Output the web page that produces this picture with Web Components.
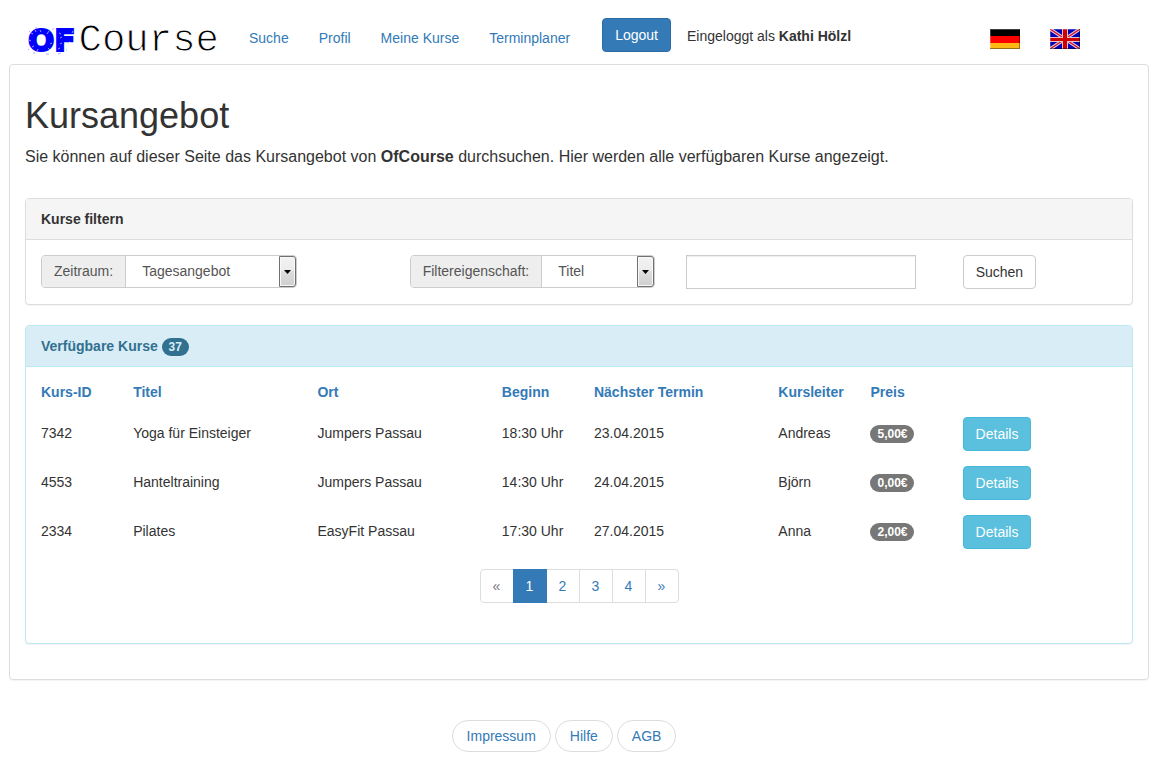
<!DOCTYPE html>
<html lang="de">
<head>
<meta charset="utf-8">
<meta name="viewport" content="width=device-width, initial-scale=1">
<title>OfCourse – Kursangebot</title>
<style>
  body {
    margin: 0;
    background: #fff;
    color: #333;
    font: 14px/20px "Liberation Sans", Arial, sans-serif;
  }
</style>
</head>
<body>
<oc-app></oc-app>

<script>
const base = `
  *, *::before, *::after { box-sizing: border-box; }
  a { color: #337ab7; text-decoration: none; }
  a:hover { text-decoration: underline; }
`;

function define(name, html, ready) {
  customElements.define(name, class extends HTMLElement {
    constructor() {
      super();
      const t = document.createElement('template');
      t.innerHTML = html;
      this.attachShadow({ mode: 'open' }).appendChild(t.content.cloneNode(true));
    }
    connectedCallback() {
      if (ready) ready(this, this.shadowRoot);
    }
  });
}

define('oc-logo', `
  <style>${base}
    :host { display: block; width: 191px; }
    a { position: relative; display: flex; align-items: baseline; line-height: 44px; white-space: nowrap; }
    a:hover { text-decoration: none; }
    .of { width: 53px; font-family: "DejaVu Sans", sans-serif; font-weight: 700; font-size: 31px; color: #00f; -webkit-text-stroke: 2px #00f; }
    .course { font-family: "Liberation Mono", "Courier New", monospace; font-size: 39px; color: #000; -webkit-text-stroke: 1px #fff; }
    svg { position: absolute; left: 0; top: 9px; }
  </style>
  <a href="#"><span class="of">OF</span><span class="course">Course</span>
  <svg width="53" height="28" viewBox="0 0 53 28" aria-hidden="true" fill="none" stroke="#fff" stroke-width="0.6">
    <path d="M3 6l2 1M7 3l1 2M21 4l-2 3M1 13l2 1M4 20l2-1M9 24l1-2M20 21l2 2M24 16l-2 1M31 6l2 1M34 10l-2 1M32 17l2-1M30 22l2-1M45 4l-1 2M41 15l2 1M12 3l1 2"/>
    <path stroke="#77f" d="M1 5l1-1M7 1h2M24 2h2M0 22l1 1M5 26h2M18 27h3M38 23h1M30 27l3-1"/>
  </svg></a>
`);

define('oc-flag', `
  <style>${base}
    :host { display: block; }
    a { display: block; }
    svg { display: none; }
    :host([country="de"]) .de, :host([country="gb"]) .gb { display: block; }
  </style>
  <a href="#">
    <svg class="de" width="30" height="20" viewBox="0 0 30 20">
      <path fill="#000" d="M0 0h30v7H0z"/><path fill="#f00" d="M0 7h30v7H0z"/><path fill="#fcb914" d="M0 14h30v6H0z"/>
      <path fill="#fff" fill-opacity=".25" d="M0 0h30v1H1v19H0z"/><path fill="#000" fill-opacity=".4" d="M30 0v20H0v-1h29V0z"/>
    </svg>
    <svg class="gb" width="30" height="20" viewBox="0 0 30 20">
      <path fill="#0000b4" d="M0 0h30v20H0z"/>
      <path stroke="#e4c8dc" stroke-width="3.4" d="M0 0l30 20M30 0L0 20"/>
      <path stroke="#d01428" stroke-width="1.3" d="M0 0l30 20M30 0L0 20"/>
      <path fill="#e4c0cc" d="M12 0h6v20h-6zM0 8h30v5H0z"/>
      <path fill="#cc0000" d="M13 0h4v20h-4zM0 9h30v3H0z"/>
      <path fill="#fff" fill-opacity=".25" d="M0 0h30v1H1v19H0z"/><path fill="#000" fill-opacity=".4" d="M30 0v20H0v-1h29V0z"/>
    </svg>
  </a>
`, (el, root) => {
  root.querySelector('a').setAttribute('aria-label', el.getAttribute('label'));
});

define('oc-button', `
  <style>${base}
    :host { display: inline-block; vertical-align: middle; }
    button {
      display: block; height: 34px; margin: 0; padding: 6px 12px; border: 1px solid #ccc; border-radius: 4px;
      background: #fff; color: #333; font: inherit; line-height: 20px; white-space: nowrap; cursor: pointer;
    }
    :host([kind="primary"]) button { background: #337ab7; border-color: #2e6da4; color: #fff; }
    :host([kind="info"]) button { background: #5bc0de; border-color: #46b8da; color: #fff; }
  </style>
  <button type="button"><slot></slot></button>
`);

define('oc-badge', `
  <style>${base}
    :host {
      display: inline-block; padding: 3px 7px; border-radius: 10px; background: #777; color: #fff;
      font-size: 12px; font-weight: 700; line-height: 12px; vertical-align: middle; white-space: nowrap;
    }
    :host([kind="info"]) { background: #31708f; color: #d9edf7; }
  </style>
  <slot></slot>
`);

define('oc-header', `
  <style>${base}
    :host { display: block; }
    header { display: flex; align-items: flex-start; height: 64px; padding: 18px 69px 0 19px; }
    nav { display: flex; gap: 30px; margin: 10px 32px 0 30px; }
    .user { margin: 8px auto 0 16px; }
    .flags { display: flex; gap: 30px; margin-top: 11px; }
  </style>
  <header>
    <oc-logo></oc-logo>
    <nav>
      <a href="#">Suche</a><a href="#">Profil</a><a href="#">Meine Kurse</a><a href="#">Terminplaner</a>
    </nav>
    <oc-button kind="primary">Logout</oc-button>
    <div class="user">Eingeloggt als <b>Kathi Hölzl</b></div>
    <div class="flags"><oc-flag country="de" label="Deutsch"></oc-flag><oc-flag country="gb" label="English"></oc-flag></div>
  </header>
`);

define('oc-panel', `
  <style>${base}
    :host { display: block; margin-bottom: 20px; --line: #ddd; --head: #f5f5f5; --ink: #333; }
    :host([kind="info"]) { --line: #bce8f1; --head: #d9edf7; --ink: #31708f; }
    section { border: 1px solid var(--line); border-radius: 4px; background: #fff; box-shadow: 0 1px 1px rgba(0,0,0,.05); }
    h2 {
      margin: 0; padding: 10px 15px; border-bottom: 1px solid var(--line); border-radius: 3px 3px 0 0;
      background: var(--head); color: var(--ink); font-size: 14px; line-height: 20px;
    }
  </style>
  <section><h2><slot name="title"></slot></h2><slot></slot></section>
`);

define('oc-select', `
  <style>${base}
    :host { display: block; }
    .group { display: flex; height: 33px; border: 1px solid #ccc; border-radius: 4px; color: #555; background: #fff; }
    label { padding: 5px 12px; border-right: 1px solid #ccc; border-radius: 3px 0 0 3px; background: #eee; white-space: nowrap; }
    .field { position: relative; flex: 1; display: flex; }
    select {
      appearance: none; flex: 1; min-width: 0; margin: 0; padding: 0 24px 1px 16px; border: 0; background: transparent;
      color: #555; font: inherit;
    }
    .arrow {
      position: absolute; right: 0; top: 0; bottom: 0; width: 17px; display: grid; place-items: center; pointer-events: none;
      border: 1px solid #707070; border-radius: 0 3px 3px 0; background: linear-gradient(#f2f2f2, #ebebeb 50%, #ddd 50%, #cfcfcf);
      box-shadow: inset 0 0 0 1px #f8f8f8;
    }
  </style>
  <div class="group">
    <label for="choice"></label>
    <div class="field"><select id="choice"></select>
      <span class="arrow"><svg width="7" height="4" viewBox="0 0 7 4" aria-hidden="true"><path d="M0 0h7L3.5 4z"/></svg></span>
    </div>
  </div>
`, (el, root) => {
  root.querySelector('label').textContent = el.getAttribute('label');
  root.querySelector('select').replaceChildren(new Option(el.getAttribute('value')));
});

define('oc-filter', `
  <style>${base}
    :host { display: block; }
    form { display: grid; grid-template-columns: 4fr 3fr 3fr 2fr; padding: 15px 0; }
    form > * { margin-left: 15px; }
    .period { margin-right: 98px; }
    .property { margin-right: 16px; }
    input {
      height: 34px; min-width: 0; margin-right: 32px; padding: 6px 12px; border: 1px solid #ccc; border-radius: 0;
      box-shadow: inset 0 1px 1px rgba(0,0,0,.075); font: inherit; color: #555;
    }
  </style>
  <form>
    <oc-select class="period" label="Zeitraum:" value="Tagesangebot"></oc-select>
    <oc-select class="property" label="Filtereigenschaft:" value="Titel"></oc-select>
    <input type="text" aria-label="Suchbegriff">
    <oc-button>Suchen</oc-button>
  </form>
`);

const courses = [
  ['7342', 'Yoga für Einsteiger', 'Jumpers Passau', '18:30 Uhr', '23.04.2015', 'Andreas', '5,00€'],
  ['4553', 'Hanteltraining', 'Jumpers Passau', '14:30 Uhr', '24.04.2015', 'Björn', '0,00€'],
  ['2334', 'Pilates', 'EasyFit Passau', '17:30 Uhr', '27.04.2015', 'Anna', '2,00€'],
];
const heads = ['Kurs-ID', 'Titel', 'Ort', 'Beginn', 'Nächster Termin', 'Kursleiter', 'Preis'];
const spans = [1, 2, 2, 1, 2, 1, 1, 2];

define('oc-courses', `
  <style>${base}
    :host { display: block; padding-top: 8px; }
    table { width: 100%; table-layout: fixed; border-collapse: collapse; }
    th, td { padding: 7px 0 8px 15px; text-align: left; vertical-align: middle; white-space: nowrap; }
    tbody td { padding-bottom: 10px; }
    tbody td:last-child { padding-bottom: 8px; }
    td oc-button { display: block; }
  </style>
  <table>
    <colgroup>${spans.map(n => `<col style="width:calc(100% * ${n} / 12)">`).join('')}</colgroup>
    <thead><tr>${heads.map(h => `<th><a href="#">${h}</a></th>`).join('')}<td></td></tr></thead>
    <tbody>${courses.map(c => `<tr>${c.map((v, i) =>
      i === 6 ? `<td><oc-badge>${v}</oc-badge></td>` : `<td>${v}</td>`).join('')}<td><oc-button kind="info">Details</oc-button></td></tr>`).join('')}</tbody>
  </table>
`);

define('oc-pagination', `
  <style>${base}
    :host { display: block; }
    ul { display: flex; justify-content: center; margin: 12px 0 40px; padding: 0; list-style: none; }
    li + li { margin-left: -1px; }
    a, span { display: block; padding: 6px 12px; min-width: 34px; text-align: center; border: 1px solid #ddd; background: #fff; }
    span { color: #777; }
    li:first-child span { border-radius: 4px 0 0 4px; }
    li:last-child a { border-radius: 0 4px 4px 0; }
    .active { position: relative; background: #337ab7; border-color: #337ab7; color: #fff; }
  </style>
  <ul>
    <li><span>«</span></li><li><a class="active" href="#">1</a></li><li><a href="#">2</a></li>
    <li><a href="#">3</a></li><li><a href="#">4</a></li><li><a href="#">»</a></li>
  </ul>
`);

define('oc-footer', `
  <style>${base}
    :host { display: block; }
    footer { display: flex; justify-content: center; gap: 4px; margin: 40px 0 14px; padding-right: 30px; }
    a { padding: 5px 14px; border: 1px solid #ddd; border-radius: 16px; }
  </style>
  <footer><a href="#">Impressum</a><a href="#">Hilfe</a><a href="#">AGB</a></footer>
`);

define('oc-app', `
  <style>${base}
    :host { display: block; padding: 0 8px 0 9px; }
    main { padding: 31px 15px 15px; border: 1px solid #ddd; border-radius: 4px; box-shadow: 0 1px 1px rgba(0,0,0,.05); }
    h1 { margin: 0 0 9px; font-size: 36px; font-weight: 400; line-height: 40px; }
    p { margin: 0 0 30px; font-size: 16px; line-height: 23px; }
  </style>
  <oc-header></oc-header>
  <main>
    <h1>Kursangebot</h1>
    <p>Sie können auf dieser Seite das Kursangebot von <b>OfCourse</b> durchsuchen. Hier werden alle verfügbaren Kurse angezeigt.</p>
    <oc-panel><span slot="title">Kurse filtern</span><oc-filter></oc-filter></oc-panel>
    <oc-panel kind="info"><span slot="title">Verfügbare Kurse <oc-badge kind="info">37</oc-badge></span>
      <oc-courses></oc-courses>
      <oc-pagination></oc-pagination>
    </oc-panel>
  </main>
  <oc-footer></oc-footer>
`);
</script>
</body>
</html>
